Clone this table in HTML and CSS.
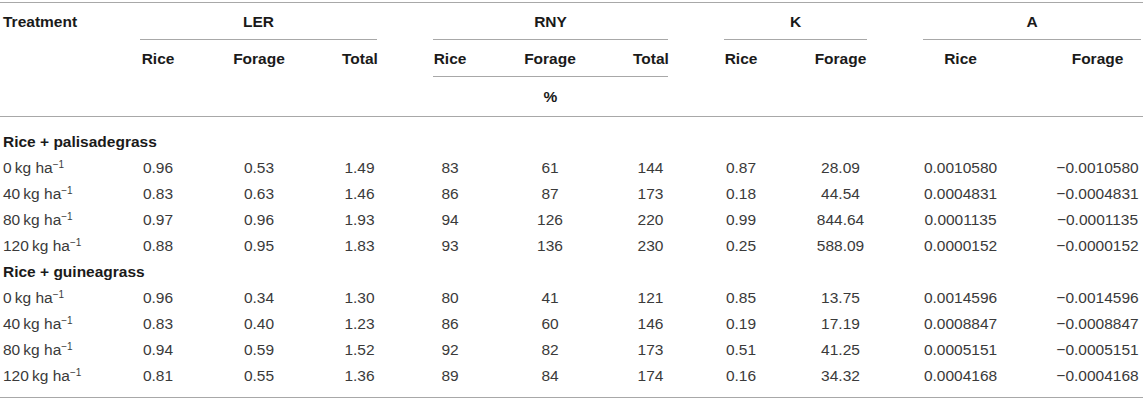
FILE: index.html
```html
<!DOCTYPE html>
<html lang="en">
<head>
    <meta charset="UTF-8">
    <meta name="viewport" content="width=device-width, initial-scale=1.0">
    <title>LER, RNY, K and A</title>
    <link rel="stylesheet" href="styles.css">
</head>
<body>
    <table class="data-table">
        <colgroup>
            <col class="c-treat">
            <col class="c-ler-rice">
            <col class="c-ler-forage">
            <col class="c-ler-total">
            <col class="c-rny-rice">
            <col class="c-rny-forage">
            <col class="c-rny-total">
            <col class="c-k-rice">
            <col class="c-k-forage">
            <col class="c-a-rice">
            <col class="c-a-forage">
        </colgroup>
        <thead>
            <tr class="head-groups">
                <th class="treat">Treatment</th>
                <th colspan="3"><div class="group-label">LER</div></th>
                <th colspan="3"><div class="group-label">RNY</div></th>
                <th colspan="2"><div class="group-label">K</div></th>
                <th colspan="2" class="last"><div class="group-label">A</div></th>
            </tr>
            <tr class="head-sub">
                <th class="treat"></th>
                <th>Rice</th>
                <th>Forage</th>
                <th>Total</th>
                <th>Rice</th>
                <th>Forage</th>
                <th>Total</th>
                <th>Rice</th>
                <th>Forage</th>
                <th>Rice</th>
                <th class="last">Forage</th>
            </tr>
            <tr class="head-unit">
                <th class="treat"></th>
                <th colspan="3"></th>
                <th colspan="3"><div class="unit-label">%</div></th>
                <th colspan="2"></th>
                <th colspan="2" class="last"></th>
            </tr>
        </thead>
        <tbody>
            <tr class="group-row first">
                <td colspan="11">Rice + palisadegrass</td>
            </tr>
            <tr>
                <td class="treat">0&#8201;kg ha<sup>&minus;1</sup></td>
                <td>0.96</td><td>0.53</td><td>1.49</td>
                <td>83</td><td>61</td><td>144</td>
                <td>0.87</td><td>28.09</td>
                <td>0.0010580</td><td class="last">&minus;0.0010580</td>
            </tr>
            <tr>
                <td class="treat">40&#8201;kg ha<sup>&minus;1</sup></td>
                <td>0.83</td><td>0.63</td><td>1.46</td>
                <td>86</td><td>87</td><td>173</td>
                <td>0.18</td><td>44.54</td>
                <td>0.0004831</td><td class="last">&minus;0.0004831</td>
            </tr>
            <tr>
                <td class="treat">80&#8201;kg ha<sup>&minus;1</sup></td>
                <td>0.97</td><td>0.96</td><td>1.93</td>
                <td>94</td><td>126</td><td>220</td>
                <td>0.99</td><td>844.64</td>
                <td>0.0001135</td><td class="last">&minus;0.0001135</td>
            </tr>
            <tr>
                <td class="treat">120&#8201;kg ha<sup>&minus;1</sup></td>
                <td>0.88</td><td>0.95</td><td>1.83</td>
                <td>93</td><td>136</td><td>230</td>
                <td>0.25</td><td>588.09</td>
                <td>0.0000152</td><td class="last">&minus;0.0000152</td>
            </tr>
            <tr class="group-row">
                <td colspan="11">Rice + guineagrass</td>
            </tr>
            <tr>
                <td class="treat">0&#8201;kg ha<sup>&minus;1</sup></td>
                <td>0.96</td><td>0.34</td><td>1.30</td>
                <td>80</td><td>41</td><td>121</td>
                <td>0.85</td><td>13.75</td>
                <td>0.0014596</td><td class="last">&minus;0.0014596</td>
            </tr>
            <tr>
                <td class="treat">40&#8201;kg ha<sup>&minus;1</sup></td>
                <td>0.83</td><td>0.40</td><td>1.23</td>
                <td>86</td><td>60</td><td>146</td>
                <td>0.19</td><td>17.19</td>
                <td>0.0008847</td><td class="last">&minus;0.0008847</td>
            </tr>
            <tr>
                <td class="treat">80&#8201;kg ha<sup>&minus;1</sup></td>
                <td>0.94</td><td>0.59</td><td>1.52</td>
                <td>92</td><td>82</td><td>173</td>
                <td>0.51</td><td>41.25</td>
                <td>0.0005151</td><td class="last">&minus;0.0005151</td>
            </tr>
            <tr class="last-row">
                <td class="treat">120&#8201;kg ha<sup>&minus;1</sup></td>
                <td>0.81</td><td>0.55</td><td>1.36</td>
                <td>89</td><td>84</td><td>174</td>
                <td>0.16</td><td>34.32</td>
                <td>0.0004168</td><td class="last">&minus;0.0004168</td>
            </tr>
        </tbody>
    </table>
</body>
</html>
```

FILE: styles.css
```css
:root {
    --rule-color: #a8a8a8;
    --head-color: #1a1a1a;
    --cell-color: #3a3a3a;
}

* {
    margin: 0;
    padding: 0;
    box-sizing: border-box;
}

body {
    font-family: 'Liberation Sans', Arial, sans-serif;
    font-size: 15.5px;
    line-height: 18px;
    color: var(--cell-color);
    background: #fff;
}

.data-table {
    width: 1143px;
    margin-top: 2px;
    table-layout: fixed;
    border-collapse: collapse;
    border-top: 1px solid var(--rule-color);
    border-bottom: 1px solid var(--rule-color);
}

/* column widths (cell padding included) */
.c-treat { width: 112px; }
.c-ler-rice { width: 92px; }
.c-ler-forage { width: 110px; }
.c-ler-total { width: 91px; }
.c-rny-rice { width: 90px; }
.c-rny-forage { width: 110px; }
.c-rny-total { width: 91px; }
.c-k-rice { width: 90px; }
.c-k-forage { width: 109px; }
.c-a-rice { width: 131px; }
.c-a-forage { width: 117px; }

th, td {
    padding: 0 28px;
    text-align: center;
    vertical-align: top;
    white-space: nowrap;
}

th {
    font-weight: bold;
    color: var(--head-color);
}

.treat {
    padding-left: 3px;
    text-align: left;
}

.last {
    padding-right: 2px;
}

thead {
    border-bottom: 1px solid var(--rule-color);
}

.head-groups th {
    padding-top: 10px;
}

.group-label {
    padding-bottom: 8px;
    border-bottom: 1px solid var(--rule-color);
}

.head-sub th {
    padding-top: 10px;
    padding-bottom: 8px;
}

.unit-label {
    padding-top: 11px;
    padding-bottom: 10px;
    border-top: 1px solid var(--rule-color);
}

.head-unit th {
    height: 40px;
}

tbody td {
    padding-top: 4px;
    padding-bottom: 4px;
}

.group-row td {
    padding-left: 3px;
    text-align: left;
    font-weight: bold;
    color: var(--head-color);
}

.group-row.first td {
    padding-top: 16px;
}

.last-row td {
    padding-bottom: 12px;
}

sup {
    font-size: 10px;
    line-height: 0;
    vertical-align: 5px;
}
```
